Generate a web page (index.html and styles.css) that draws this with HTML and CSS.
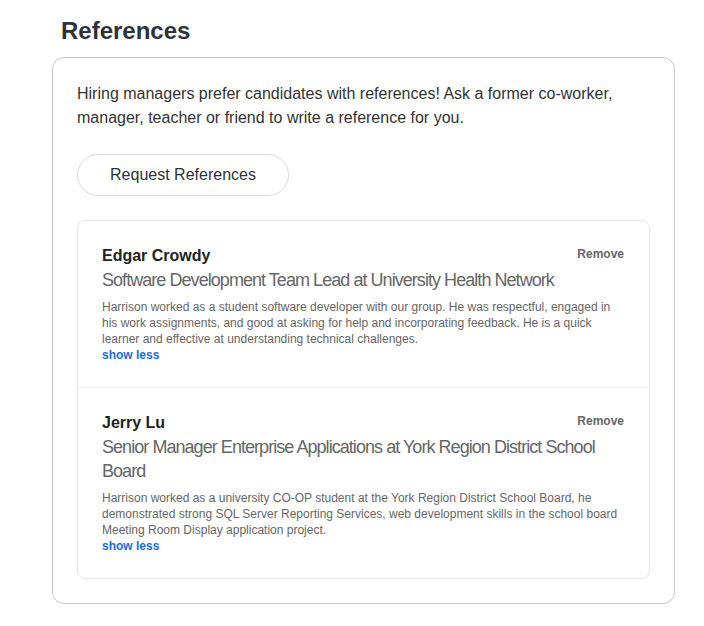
FILE: index.html
```html
<!DOCTYPE html>
<html lang="en">
<head>
<meta charset="utf-8">
<title>References</title>
<link rel="stylesheet" href="styles.css">
</head>
<body>
<section class="refs">
  <h2 class="refs-title">References</h2>
  <div class="refs-card">
    <p class="refs-intro">Hiring managers prefer candidates with references! Ask a former co-worker, manager, teacher or friend to write a reference for you.</p>
    <button class="refs-btn" type="button">Request References</button>
    <ul class="refs-list">
      <li class="ref-item">
        <div class="ref-head">
          <span class="ref-name">Edgar Crowdy</span>
          <a class="ref-remove" href="#">Remove</a>
        </div>
        <div class="ref-role">Software Development Team Lead at University Health Network</div>
        <p class="ref-desc">Harrison worked as a student software developer with our group. He was respectful, engaged in his work assignments, and good at asking for help and incorporating feedback. He is a quick learner and effective at understanding technical challenges.</p>
        <a class="ref-toggle" href="#">show less</a>
      </li>
      <li class="ref-item">
        <div class="ref-head">
          <span class="ref-name">Jerry Lu</span>
          <a class="ref-remove" href="#">Remove</a>
        </div>
        <div class="ref-role">Senior Manager Enterprise Applications at York Region District School Board</div>
        <p class="ref-desc">Harrison worked as a university CO-OP student at the York Region District School Board, he demonstrated strong SQL Server Reporting Services, web development skills in the school board Meeting Room Display application project.</p>
        <a class="ref-toggle" href="#">show less</a>
      </li>
    </ul>
  </div>
</section>
</body>
</html>
```

FILE: styles.css
```css
* { box-sizing: border-box; }
html, body { margin: 0; padding: 0; background: #fff; }
body {
  font-family: "Liberation Sans", Arial, sans-serif;
  color: #333;
}
.refs {
  padding: 16px 29px 0 52px;
}
.refs-title {
  margin: 0 0 11px 9px;
  font-size: 24px;
  line-height: 30px;
  font-weight: 700;
  color: #2d3338;
}
.refs-card {
  border: 1px solid #c8c8c8;
  border-radius: 12px;
  padding: 24px;
}
.refs-intro {
  margin: 0;
  font-size: 16px;
  line-height: 24px;
  color: #333;
}
.refs-btn {
  display: inline-flex;
  align-items: center;
  justify-content: center;
  margin-top: 24px;
  width: 212px;
  height: 42px;
  padding: 0;
  border: 1px solid #dcdcdc;
  border-radius: 21px;
  background: #fff;
  font-family: inherit;
  font-size: 16px;
  color: #2d3338;
}
.refs-list {
  list-style: none;
  margin: 24px 0 0;
  padding: 0;
  border: 1px solid #e6e6e6;
  border-radius: 8px;
}
.ref-item {
  padding: 25px 25px 24px 24px;
}
.ref-item + .ref-item {
  border-top: 1px solid #f1f1f1;
}
.ref-head {
  display: flex;
  justify-content: space-between;
  align-items: flex-start;
}
.ref-name {
  font-size: 16px;
  line-height: 20px;
  font-weight: 700;
  color: #222;
}
.ref-remove {
  font-size: 12px;
  line-height: 16px;
  font-weight: 700;
  color: #666;
  text-decoration: none;
}
.ref-role {
  margin-top: 2px;
  font-size: 18px;
  line-height: 24px;
  letter-spacing: -0.95px;
  color: #666;
}
.ref-desc {
  margin: 7px 0 0;
  font-size: 12px;
  line-height: 16px;
  color: #666;
}
.ref-toggle {
  display: block;
  font-size: 12px;
  line-height: 16px;
  font-weight: 700;
  color: #1a6ae6;
  text-decoration: none;
}
```
